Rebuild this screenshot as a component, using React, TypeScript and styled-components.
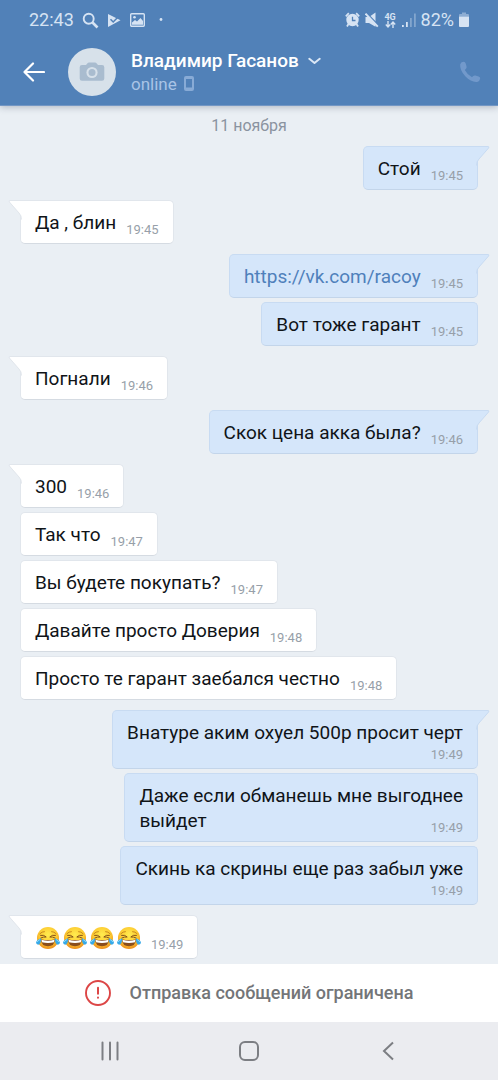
import React from 'react';
import styled, { createGlobalStyle } from 'styled-components';

const GlobalStyle = createGlobalStyle`
  *, *::before, *::after { box-sizing: border-box; }
  body {
    margin: 0;
    background: #eaeff4;
    font-family: Roboto, "Noto Sans", sans-serif;
  }
  button { font: inherit; color: inherit; background: none; border: 0; padding: 0; cursor: pointer; }
  svg { display: block; flex: none; }
`;

const Screen = styled.div`
  display: flex;
  flex-direction: column;
  min-height: 100vh;
`;

const Header = styled.header`
  position: relative;
  z-index: 1;
  background: #5181b8;
  color: #fff;
  border-bottom: 1px solid #7397c4;
  box-shadow: 0 1px 7px rgba(40, 55, 80, 0.32);
`;

const StatusBar = styled.div`
  display: flex;
  align-items: center;
  justify-content: space-between;
  height: 40px;
  padding: 0 29px 0 29px;
  color: #d6e3f3;
  font-size: 18px;
  line-height: 20px;
`;

const StatusGroup = styled.div<{ $gap: number }>`
  display: flex;
  align-items: center;
  gap: ${(p) => p.$gap}px;
`;

const NetworkMark = styled.span`
  display: flex;
  flex-direction: column;
  align-items: center;
  width: 13px;
  font-size: 9px;
  font-weight: 700;
  line-height: 8px;
`;

const TitleBar = styled.div`
  display: flex;
  align-items: center;
  height: 65px;
  padding: 0 17px 2px 23px;
`;

const BackButton = styled.button`
  width: 45px;
`;

const Avatar = styled.div`
  display: flex;
  align-items: center;
  justify-content: center;
  width: 48px;
  height: 48px;
  border-radius: 50%;
  background: #d7e1ea;
  flex: none;
`;

const Contact = styled.div`
  flex: 1;
  min-width: 0;
  padding-left: 15px;
`;

const NameButton = styled.button`
  display: flex;
  align-items: center;
  gap: 9px;
  font-size: 19px;
  font-weight: 500;
  line-height: 24px;
  white-space: nowrap;
`;

const Presence = styled.div`
  display: flex;
  align-items: center;
  gap: 7px;
  color: #a9c4e6;
  font-size: 17px;
  line-height: 22px;
`;

const Chat = styled.main`
  flex: 1;
  display: flex;
  flex-direction: column;
  gap: 10px;
  padding: 10px 20px 5px;
  background: #eaeff4;
`;

const DateLabel = styled.time`
  align-self: center;
  color: #8a93a0;
  font-size: 16px;
  line-height: 20px;
`;

const Group = styled.section<{ $out?: boolean }>`
  display: flex;
  flex-direction: column;
  gap: 4px;
  align-items: ${(p) => (p.$out ? 'flex-end' : 'flex-start')};
`;

const Bubble = styled.article<{ $out?: boolean }>`
  position: relative;
  max-width: 84%;
  padding: 9px 14px 6px;
  border: 1px solid ${(p) => (p.$out ? '#c8dbf2' : '#e1e6ec')};
  border-bottom-color: ${(p) => (p.$out ? '#c3d5ea' : '#d5dbe2')};
  border-radius: 5px;
  background: ${(p) => (p.$out ? '#d5e6fa' : '#fff')};
`;

const LastLine = styled.div<{ $stacked?: boolean }>`
  display: flex;
  flex-direction: ${(p) => (p.$stacked ? 'column' : 'row')};
  align-items: flex-end;
  justify-content: space-between;
  gap: ${(p) => (p.$stacked ? 0 : 10)}px;
`;

const Tail = styled.svg<{ $out?: boolean }>`
  position: absolute;
  top: -1px;
  ${(p) => (p.$out ? 'right: -13px;' : 'left: -13px; transform: scaleX(-1);')}
`;

const Text = styled.div`
  color: #101418;
  font-size: 19px;
  line-height: 25px;
`;

const LastText = styled(Text)`
  padding-bottom: 2px;
`;

const Link = styled.a`
  color: #4f80bb;
  text-decoration: none;
`;

const Stamp = styled.time`
  color: #979fa9;
  font-size: 13px;
  line-height: 15px;
`;

const Emojis = styled.span`
  display: flex;
  align-items: center;
  gap: 3px;
  height: 25px;
  padding-left: 1px;
`;

const Notice = styled.footer`
  display: flex;
  align-items: center;
  justify-content: center;
  gap: 19px;
  height: 58px;
  background: #fff;
  color: #737578;
  font-size: 18px;
  font-weight: 500;
  line-height: 24px;
`;

const NavBar = styled.nav`
  display: flex;
  justify-content: center;
  height: 58px;
  background: #ebecf0;
`;

const NavButton = styled.button`
  display: flex;
  align-items: center;
  justify-content: center;
  flex: 0 0 28%;
`;

const Joy = () => (
  <svg width="24" height="24" viewBox="0 0 24 24" aria-hidden="true">
    <defs>
      <radialGradient id="face" cx="50%" cy="35%" r="65%">
        <stop offset="0" stopColor="#ffec4f" />
        <stop offset="0.6" stopColor="#fdcb32" />
        <stop offset="1" stopColor="#ec8d1c" />
      </radialGradient>
    </defs>
    <circle cx="12" cy="12" r="11" fill="url(#face)" />
    <path d="M3.8 7.8Q6 5.4 8.4 5.6M20.2 7.8Q18 5.4 15.6 5.6" fill="none" stroke="#c98a1c" strokeWidth="1" strokeLinecap="round" />
    <path d="M4.6 9.3Q8 8.6 10.2 11Q7.5 10.6 4.8 12M19.4 9.3Q16 8.6 13.8 11Q16.5 10.6 19.2 12" fill="none" stroke="#84511a" strokeWidth="1" strokeLinecap="round" strokeLinejoin="round" />
    <path d="M4.8 13.2Q12 15 19.2 13.2Q18.6 20.2 12 20.2Q5.4 20.2 4.8 13.2Z" fill="#8a4d1c" />
    <path d="M5.4 13.8Q12 15.5 18.6 13.8L18 16.2Q12 17.6 6 16.2Z" fill="#fff" />
    <path d="M5.2 12.2Q5 18.6 2.2 18.7Q-0.3 18.5 0.2 16Q0.8 13.6 5.2 12.2ZM18.8 12.2Q19 18.6 21.8 18.7Q24.3 18.5 23.8 16Q23.2 13.6 18.8 12.2Z" fill="#36a9e8" />
    <path d="M3.9 13.6Q1.6 14.6 1.3 16M20.1 13.6Q22.4 14.6 22.7 16" fill="none" stroke="#8bdcff" strokeWidth="1" />
  </svg>
);

type Message = { lead?: string; body: React.ReactNode; time: string; stacked?: boolean };
type MessageGroup = { out?: boolean; messages: Message[] };

const groups: MessageGroup[] = [
  { out: true, messages: [{ body: 'Стой', time: '19:45' }] },
  { messages: [{ body: 'Да , блин', time: '19:45' }] },
  {
    out: true,
    messages: [
      { body: <Link href="https://vk.com/racoy">https://vk.com/racoy</Link>, time: '19:45' },
      { body: 'Вот тоже гарант', time: '19:45' },
    ],
  },
  { messages: [{ body: 'Погнали', time: '19:46' }] },
  { out: true, messages: [{ body: 'Скок цена акка была?', time: '19:46' }] },
  {
    messages: [
      { body: '300', time: '19:46' },
      { body: 'Так что', time: '19:47' },
      { body: 'Вы будете покупать?', time: '19:47' },
      { body: 'Давайте просто Доверия', time: '19:48' },
      { body: 'Просто те гарант заебался честно', time: '19:48' },
    ],
  },
  {
    out: true,
    messages: [
      { body: 'Внатуре аким охуел 500р просит черт', time: '19:49', stacked: true },
      { lead: 'Даже если обманешь мне выгоднее', body: 'выйдет', time: '19:49' },
      { body: 'Скинь ка скрины еще раз забыл уже', time: '19:49', stacked: true },
    ],
  },
  {
    messages: [
      {
        body: (
          <Emojis role="img" aria-label="😂😂😂😂">
            <Joy /><Joy /><Joy /><Joy />
          </Emojis>
        ),
        time: '19:49',
      },
    ],
  },
];

const MessageBubble = ({ message, out, tail }: { message: Message; out?: boolean; tail: boolean }) => (
  <Bubble $out={out}>
    {tail && (
      <Tail $out={out} width="18" height="20" viewBox="0 0 18 20" aria-hidden="true">
        <path d="M0 0.5H16Q17.6 0.6 16.6 2L7 13Q4.5 15.5 4.5 19H0Z" fill={out ? '#d5e6fa' : '#fff'} />
        <path
          d="M0 0.5H16Q17.6 0.6 16.6 2L7 13Q4.5 15.5 4.5 19.5"
          fill="none"
          stroke={out ? '#c8dbf2' : '#e1e6ec'}
        />
      </Tail>
    )}
    {message.lead && <Text>{message.lead}</Text>}
    <LastLine $stacked={message.stacked}>
      <LastText>{message.body}</LastText>
      <Stamp>{message.time}</Stamp>
    </LastLine>
  </Bubble>
);

const StatusIcons = () => (
  <StatusBar>
    <StatusGroup $gap={8}>
      <span>22:43</span>
      <svg width="17" height="17" viewBox="0 0 17 17" fill="none" stroke="currentColor">
        <circle cx="6.7" cy="6.7" r="5" strokeWidth="1.9" />
        <path d="M10.5 10.5L15.5 15.5" strokeWidth="2.6" />
      </svg>
      <svg width="14" height="15" viewBox="0 0 14 15">
        <path d="M1 1L13.5 7.3L1 14Z" fill="currentColor" />
        <path d="M3.5 6.2L6.2 9L11.8 3.2" fill="none" stroke="#5181b8" strokeWidth="1.5" />
      </svg>
      <svg width="17" height="16" viewBox="0 0 17 16" fill="none" stroke="currentColor">
        <rect x="1.7" y="1.7" width="13.6" height="12.6" rx="1" strokeWidth="1.4" />
        <path d="M3 12.8V10.5L6 8L8 9.5L11.5 6L14 9V12.8Z" fill="currentColor" stroke="none" />
        <circle cx="5.5" cy="5.2" r="1.3" fill="currentColor" stroke="none" />
      </svg>
      <svg width="14" height="4" viewBox="0 0 14 4"><circle cx="7" cy="1.5" r="1.4" fill="currentColor" /></svg>
    </StatusGroup>
    <StatusGroup $gap={5}>
      <svg width="15" height="16" viewBox="0 0 15 16" fill="none" stroke="currentColor">
        <circle cx="7.5" cy="8" r="6.2" fill="currentColor" stroke="none" />
        <path d="M0.8 4.4L3.8 1.2M14.2 4.4L11.2 1.2" strokeWidth="1.7" />
        <path d="M3.5 12L2 14.5M11.5 12L13 14.5" strokeWidth="1.8" />
        <path d="M7.5 4.8V8.5H10.5" stroke="#5181b8" strokeWidth="1.3" />
      </svg>
      <svg width="14" height="16" viewBox="0 0 14 16">
        <path d="M0.5 5H4L10.5 0.6V14.8L4 11H0.5Z" fill="currentColor" />
        <path d="M1.4 0.7L13.6 13.4" stroke="#5181b8" strokeWidth="1.4" />
        <path d="M0.5 1.6L12.8 14.6" stroke="currentColor" strokeWidth="2" />
      </svg>
      <NetworkMark>
        <span>4G</span>
        <svg width="11" height="7" viewBox="0 0 11 7" fill="none" stroke="currentColor" strokeWidth="1.4">
          <path d="M3 0V5.6M0.8 3.6L3 5.9L5.2 3.6M8 7V1.2M5.8 3.4L8 1.1L10.2 3.4" />
        </svg>
      </NetworkMark>
      <svg width="14" height="15" viewBox="0 0 14 15" fill="currentColor">
        <path d="M0 12H1.8V14H0ZM4 9H5.8V14H4Z" />
        <path d="M8 5H9.8V14H8ZM12 0.5H13.8V14H12Z" opacity="0.38" />
      </svg>
      <span>82%</span>
      <svg width="10" height="16" viewBox="0 0 10 16" fill="currentColor">
        <path d="M3 0.5H7V2H9Q10 2 10 3V4.5H0V3Q0 2 1 2H3Z" opacity="0.45" />
        <path d="M0 4.5H10V14Q10 15 9 15H1Q0 15 0 14Z" />
      </svg>
    </StatusGroup>
  </StatusBar>
);

export default function App() {
  return (
    <Screen>
      <GlobalStyle />
      <Header>
        <StatusIcons />
        <TitleBar>
          <BackButton aria-label="Назад">
            <svg width="22" height="20" viewBox="0 0 22 20" fill="none" stroke="#fff" strokeWidth="2.2" strokeLinecap="round" strokeLinejoin="round">
              <path d="M21 10H1.5M10 1.5L1.5 10L10 18.5" />
            </svg>
          </BackButton>
          <Avatar>
            <svg width="26" height="20" viewBox="0 0 26 20">
              <path d="M3 3H7L8.5 1.2Q9 0.6 10 0.6H16Q17 0.6 17.5 1.2L19 3H23Q25.3 3 25.3 5.3V16.5Q25.3 18.8 23 18.8H3Q0.7 18.8 0.7 16.5V5.3Q0.7 3 3 3Z" fill="#a9bccf" />
              <circle cx="13" cy="10.5" r="5.6" fill="#d7e1ea" />
              <circle cx="13" cy="10.5" r="3.5" fill="#a9bccf" />
            </svg>
          </Avatar>
          <Contact>
            <NameButton>
              Владимир Гасанов
              <svg width="13" height="8" viewBox="0 0 13 8" fill="none" stroke="#dbe7f5" strokeWidth="2" strokeLinecap="round" strokeLinejoin="round">
                <path d="M1.3 1.8L6.5 6L11.7 1.8" />
              </svg>
            </NameButton>
            <Presence>
              online
              <svg width="10" height="15" viewBox="0 0 10 15">
                <path fillRule="evenodd" d="M2 0H8Q10 0 10 2V13Q10 15 8 15H2Q0 15 0 13V2Q0 0 2 0ZM2 3V11.5H8V3Z" fill="#88abd6" />
              </svg>
            </Presence>
          </Contact>
          <button aria-label="Позвонить">
            <svg width="22" height="22" viewBox="0 0 22 22">
              <path d="M1.2 3.2Q2.2 0.8 4.8 0.8Q6.2 0.8 6.8 2.8L7.6 5.8Q7.8 7 6.7 8L5.8 9Q8.3 13.8 13 16.2L14.2 15.1Q15.2 14.2 16.4 14.6L19.6 15.5Q21.3 16 21.2 17.6Q20.8 20.2 18.2 20.9Q12.3 21.5 6.5 15.5Q0.6 9.3 1.2 3.2Z" fill="#7299cb" />
            </svg>
          </button>
        </TitleBar>
      </Header>
      <Chat>
        <DateLabel>11 ноября</DateLabel>
        {groups.map((group, g) => (
          <Group key={g} $out={group.out}>
            {group.messages.map((message, m) => (
              <MessageBubble key={m} message={message} out={group.out} tail={m === 0} />
            ))}
          </Group>
        ))}
      </Chat>
      <Notice>
        <svg width="26" height="26" viewBox="0 0 26 26" fill="none" stroke="#dc4646" strokeLinecap="round">
          <circle cx="13" cy="13" r="12" strokeWidth="1.9" />
          <path d="M13 7.8V13.8M13 17.6V17.8" strokeWidth="2" />
        </svg>
        <span>Отправка сообщений ограничена</span>
      </Notice>
      <NavBar>
        <NavButton aria-label="Недавние">
          <svg width="18" height="20" viewBox="0 0 18 20" stroke="#7c7e83" strokeWidth="2" strokeLinecap="round">
            <path d="M1.5 1.5V18.5M9 1.5V18.5M16.5 1.5V18.5" />
          </svg>
        </NavButton>
        <NavButton aria-label="Домой">
          <svg width="20" height="20" viewBox="0 0 20 20" fill="none" stroke="#7c7e83" strokeWidth="2">
            <rect x="1" y="1" width="18" height="18" rx="5" />
          </svg>
        </NavButton>
        <NavButton aria-label="Назад">
          <svg width="12" height="20" viewBox="0 0 12 20" fill="none" stroke="#7c7e83" strokeWidth="2">
            <path d="M11 1.5L2 10L11 18.5" />
          </svg>
        </NavButton>
      </NavBar>
    </Screen>
  );
}
